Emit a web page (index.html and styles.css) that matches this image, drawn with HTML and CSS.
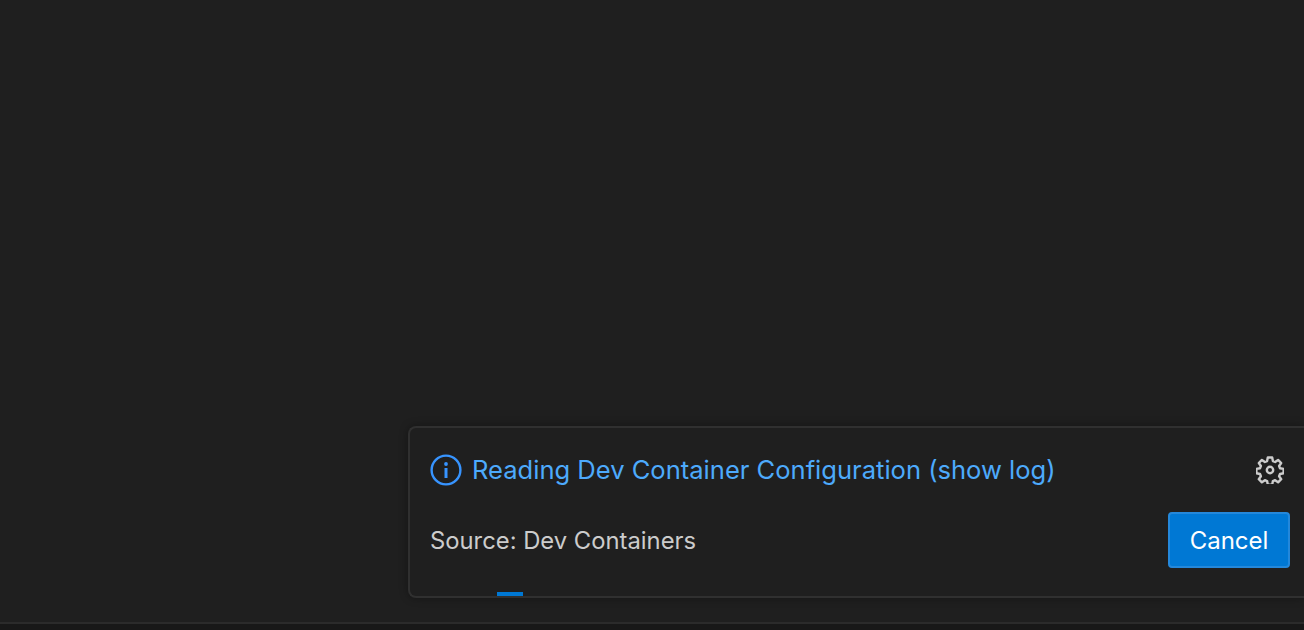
FILE: index.html
```html
<!DOCTYPE html>
<html lang="en">
<head>
<meta charset="utf-8">
<title>Dev Containers</title>
<link rel="stylesheet" href="styles.css">
</head>
<body>
<main class="workbench">
  <section class="toast">
    <div class="toast-row toast-head">
      <svg class="info-icon" viewBox="0 0 32 32" width="32" height="32" aria-hidden="true">
        <circle cx="16" cy="16" r="14.4" fill="none" stroke="#3794ff" stroke-width="2.4"/>
        <rect x="14.5" y="14" width="3" height="10" fill="#3794ff"/>
        <circle cx="16" cy="10" r="1.9" fill="#3794ff"/>
      </svg>
      <a class="toast-title">Reading Dev Container Configuration (show log)</a>
      <svg class="gear-icon" viewBox="0 0 28 28" width="28" height="28" aria-hidden="true">
        <path fill="none" stroke="#cccccc" stroke-width="2.4" stroke-linejoin="round" d="M11.8 1.5h4.4l.7 3.6 2.2.9 3-2.1 3.1 3.1-2.1 3 .9 2.2 3.6.7v4.4l-3.6.7-.9 2.2 2.1 3-3.1 3.1-3-2.1-2.2.9-.7 3.6h-4.4l-.7-3.6-2.2-.9-3 2.1-3.1-3.1 2.1-3-.9-2.2-3.6-.7v-4.4l3.6-.7.9-2.2-2.1-3 3.1-3.1 3 2.1 2.2-.9z"/>
        <circle cx="14" cy="14" r="3.2" fill="none" stroke="#cccccc" stroke-width="2.4"/>
      </svg>
    </div>
    <div class="toast-row toast-foot">
      <span class="toast-source">Source: Dev Containers</span>
      <button class="cancel-btn" type="button">Cancel</button>
    </div>
    <div class="progress"><div class="progress-bit"></div></div>
  </section>
</main>
<footer class="statusbar"></footer>
</body>
</html>
```
FILE: styles.css
```css
* { box-sizing: border-box; }
html, body { height: 100%; }
body {
  margin: 0;
  display: flex;
  flex-direction: column;
  background: #1f1f1f;
  font-family: Inter, "Liberation Sans", sans-serif;
  overflow: hidden;
}
.workbench {
  flex: 1;
  display: flex;
  justify-content: flex-end;
  align-items: flex-end;
  padding-bottom: 24px;
}
.toast {
  width: 896px;
  height: 172px;
  display: flex;
  flex-direction: column;
  background: #1f1f1f;
  border: 2px solid #303030;
  border-right: 0;
  border-radius: 8px 0 0 8px;
  box-shadow: 0 0 8px rgba(0, 0, 0, 0.35);
  padding: 0 14px 0 20px;
  position: relative;
}
.toast-row { display: flex; align-items: center; }
.toast-head { height: 84px; }
.info-icon { flex: none; margin-right: 10px; }
.toast-title {
  flex: 1;
  color: #4daafc;
  font-size: 25.55px;
  padding-bottom: 1px;
}
.gear-icon { margin-right: 6px; flex: none; }
.toast-foot { justify-content: space-between; }
.toast-source {
  color: #cccccc;
  font-size: 23.8px;
}
.cancel-btn {
  width: 122px;
  height: 56px;
  background: #0078d4;
  border: 2px solid #2488db;
  border-radius: 4px;
  color: #ffffff;
  font: inherit;
  font-size: 24px;
}
.progress {
  position: absolute;
  left: 0;
  right: 0;
  bottom: 0;
  height: 4px;
}
.progress-bit {
  position: absolute;
  left: 87px;
  width: 26px;
  height: 4px;
  background: #0078d4;
}
.statusbar {
  flex: none;
  height: 8px;
  background: #181818;
  border-top: 2px solid #2b2b2b;
}
```
